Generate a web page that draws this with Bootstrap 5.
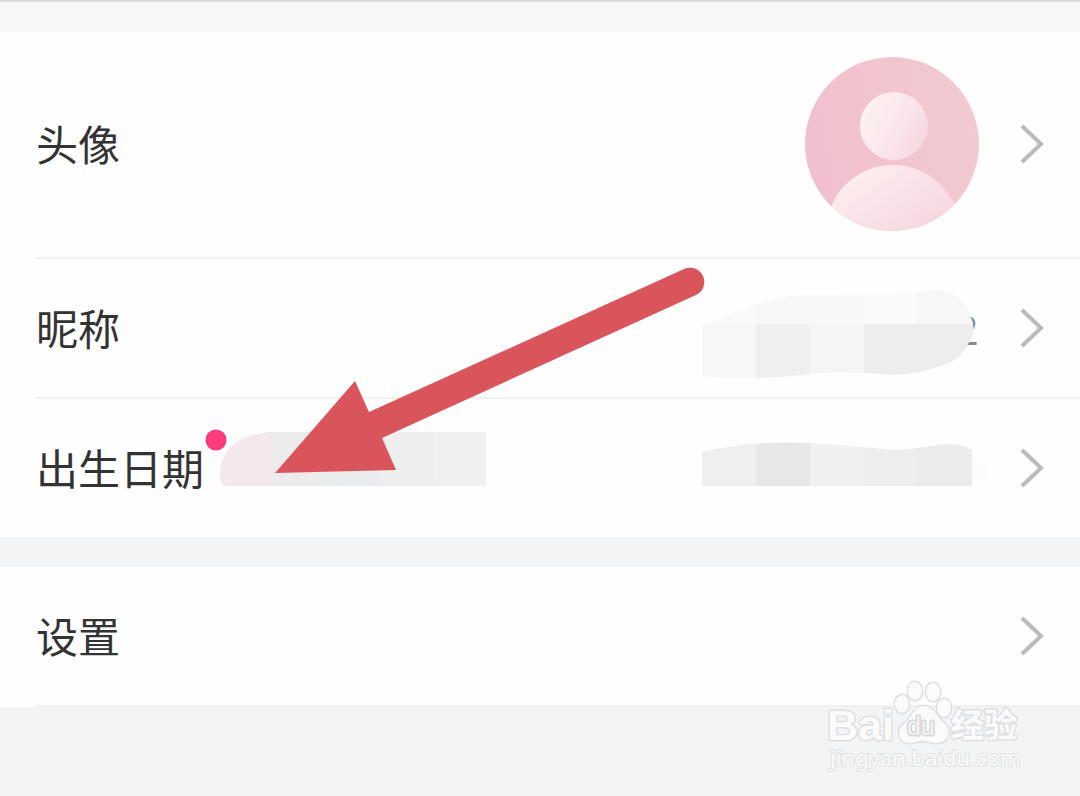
<!DOCTYPE html>
<html lang="zh-CN">
<head>
<meta charset="utf-8">
<meta name="viewport" content="width=device-width, initial-scale=1">
<title>个人资料</title>
<link href="https://cdn.jsdelivr.net/npm/bootstrap@5.3.0/dist/css/bootstrap.min.css" rel="stylesheet">
<style>
  body { background: #f3f4f6; color: #333; font-family: "Noto Sans CJK SC", sans-serif; font-size: 42px; line-height: 60px; }
  .top-strip { height: 32px; background: #f6f8f7; border-top: 2px solid #dcdcdc; }
  .setting-group { background: #fefefe; }
  .setting-row { margin-left: 36px; padding-right: 36px; height: 140px; border-bottom: 2px solid #f0f0f1; }
  .setting-row.tall-row { height: 227px; padding-bottom: 2px; }
  .setting-group.main-group .setting-row:last-child { border-bottom: 0; height: 138px; }
  .row-label { padding-bottom: 2px; }
  .group-gap { height: 30px; }
  .row-end { gap: 41px; }
  .arrow-mark { left: 239px; top: -132px; pointer-events: none; }
  .page-foot { min-height: 88px; }
  .brand-mark { right: 51px; top: -31px; }
  svg { display: block; flex: none; }
</style>
</head>
<body>
<header class="top-strip"></header>
<main>
  <section class="setting-group main-group">
    <a href="#avatar" class="setting-row tall-row d-flex align-items-center justify-content-between text-reset text-decoration-none">
      <span class="row-label">头像</span>
      <span class="row-end d-flex align-items-center">
        <svg width="174" height="174" viewBox="0 0 174 174" role="img" aria-label="头像">
          <defs>
            <linearGradient id="disc" x1="0" y1=".6" x2="1" y2=".4"><stop offset="0" stop-color="#f1bfce"/><stop offset="1" stop-color="#f2cad0"/></linearGradient>
            <linearGradient id="skin" x1="0" y1=".2" x2="1" y2=".7"><stop offset="0" stop-color="#fdf3f2"/><stop offset=".6" stop-color="#fae5ea"/><stop offset="1" stop-color="#f7d6de"/></linearGradient>
            <linearGradient id="body-skin" x1=".2" y1="0" x2=".6" y2=".6"><stop offset="0" stop-color="#fdf0f0"/><stop offset="1" stop-color="#f6d6e0"/></linearGradient>
            <clipPath id="round"><circle cx="87" cy="87" r="87"/></clipPath>
          </defs>
          <g clip-path="url(#round)">
            <rect width="174" height="174" fill="url(#disc)"/>
            <circle cx="89" cy="69" r="34" fill="url(#skin)"/>
            <circle cx="88" cy="175" r="67" fill="url(#body-skin)"/>
          </g>
        </svg>
        <svg width="24" height="40" viewBox="0 0 24 40" fill="none" stroke="#bbb" stroke-width="4"><path d="M2 2 21 20 2 38"/></svg>
      </span>
    </a>
    <a href="#nickname" class="setting-row d-flex align-items-center justify-content-between text-reset text-decoration-none">
      <span class="row-label">昵称</span>
      <span class="row-end d-flex align-items-center">
        <svg width="277" height="100" viewBox="0 0 277 100">
          <defs><clipPath id="nick"><path d="M0 46L20 40Q50 22 100 17Q170 18 235 12Q262 15 268 38Q276 52 266 66Q258 84 232 90Q206 99 180 96Q130 92 100 97Q60 102 0 99Z"/></clipPath></defs>
          <text x="253" y="67" font-family="Roboto, sans-serif" font-size="41" fill="#8a8a8a">2</text>
          <g clip-path="url(#nick)">
            <rect width="277" height="46" fill="#fafafa"/>
            <rect x="54" width="108" height="46" fill="#f8f8f8"/>
            <rect x="216" width="61" height="46" fill="#f7f7f7"/>
            <rect y="46" width="54" height="54" fill="#f7f7f7"/>
            <rect x="54" y="46" width="54" height="54" fill="#efefef"/>
            <rect x="108" y="46" width="54" height="54" fill="#f5f5f5"/>
            <rect x="162" y="46" width="115" height="54" fill="#ededed"/>
          </g>
        </svg>
        <svg width="24" height="40" viewBox="0 0 24 40" fill="none" stroke="#bbb" stroke-width="4"><path d="M2 2 21 20 2 38"/></svg>
      </span>
    </a>
    <a href="#birthday" class="setting-row position-relative d-flex align-items-center justify-content-between text-reset text-decoration-none">
      <span class="d-flex align-items-center">
        <span class="row-label">出生日期</span>
        <svg width="282" height="100" viewBox="4 0 282 100">
          <defs><clipPath id="hint"><path d="M70 14H286V68H26Q19 68 20 52Q25 17 70 14Z"/></clipPath></defs>
          <g clip-path="url(#hint)">
            <rect width="71" height="100" fill="#f5e8ec"/>
            <rect x="71" width="54" height="100" fill="#ececed"/>
            <rect x="125" width="54" height="100" fill="#ebecee"/>
            <rect x="179" width="54" height="100" fill="#eee"/>
            <rect x="233" width="53" height="100" fill="#f0f0f0"/>
          </g>
          <circle cx="16" cy="22" r="10.5" fill="#fb3c78"/>
        </svg>
      </span>
      <span class="row-end d-flex align-items-center">
        <svg width="277" height="100" viewBox="0 0 277 100" overflow="visible">
          <defs><clipPath id="birth"><path d="M0 34Q50 22 108 25Q150 28 195 32Q220 30 240 26Q260 25 270 32V68H0Z"/></clipPath></defs>
          <path d="M271 34Q286 44 288 68H271Z" fill="#fcfcfc"/>
          <g clip-path="url(#birth)">
            <rect width="54" height="100" fill="#efefef"/>
            <rect x="54" width="54" height="100" fill="#e7e7e7"/>
            <rect x="108" width="54" height="100" fill="#f0f0f0"/>
            <rect x="162" width="54" height="100" fill="#ededed"/>
            <rect x="216" width="54" height="100" fill="#ebebeb"/>
          </g>
        </svg>
        <svg width="24" height="40" viewBox="0 0 24 40" fill="none" stroke="#bbb" stroke-width="4"><path d="M2 2 21 20 2 38"/></svg>
      </span>
      <svg class="arrow-mark position-absolute" width="430" height="207" viewBox="0 0 430 207" aria-hidden="true">
        <path d="M0 206 80 114 94 145 409 2A14 14 0 0 1 421 28L107 171 121 203Z" fill="#da555b"/>
      </svg>
    </a>
  </section>
  <div class="group-gap"></div>
  <section class="setting-group">
    <a href="#settings" class="setting-row d-flex align-items-center justify-content-between text-reset text-decoration-none">
      <span class="row-label">设置</span>
      <svg width="24" height="40" viewBox="0 0 24 40" fill="none" stroke="#bbb" stroke-width="4"><path d="M2 2 21 20 2 38"/></svg>
    </a>
  </section>
</main>
<footer class="page-foot position-relative">
  <svg class="brand-mark position-absolute" width="204" height="104" viewBox="0 0 204 104" fill="#fbfbfc" stroke="#dfe0e2" stroke-width="3" paint-order="stroke" stroke-linejoin="round">
    <text x="2" y="64" font-family="Liberation Sans, sans-serif" font-weight="700" font-size="43">Bai</text>
    <g stroke-width="3">
      <ellipse cx="77" cy="28" rx="7" ry="9"/><ellipse cx="90" cy="15" rx="7" ry="9"/><ellipse cx="108" cy="16" rx="7" ry="9"/><ellipse cx="119" cy="32" rx="7" ry="9"/>
      <path d="M98 30C108 30 112 41 119 47C128 54 123 67 112 67C106 67 103 65 98 65C92 65 89 67 84 67C73 66 71 54 79 48C87 42 89 30 98 30Z"/>
    </g>
    <text x="82" y="59" font-family="Liberation Sans, sans-serif" font-size="25" fill="#f3f4f6" stroke="#d4d5d8">du</text>
    <text x="126" y="61" font-family="Noto Sans CJK SC, sans-serif" font-weight="700" font-size="33">经验</text>
    <text x="5" y="90" font-family="Noto Sans, sans-serif" font-size="22" stroke-width="2">jingyan.baidu.com</text>
  </svg>
</footer>
<script src="https://cdn.jsdelivr.net/npm/bootstrap@5.3.0/dist/js/bootstrap.bundle.min.js"></script>
</body>
</html>
